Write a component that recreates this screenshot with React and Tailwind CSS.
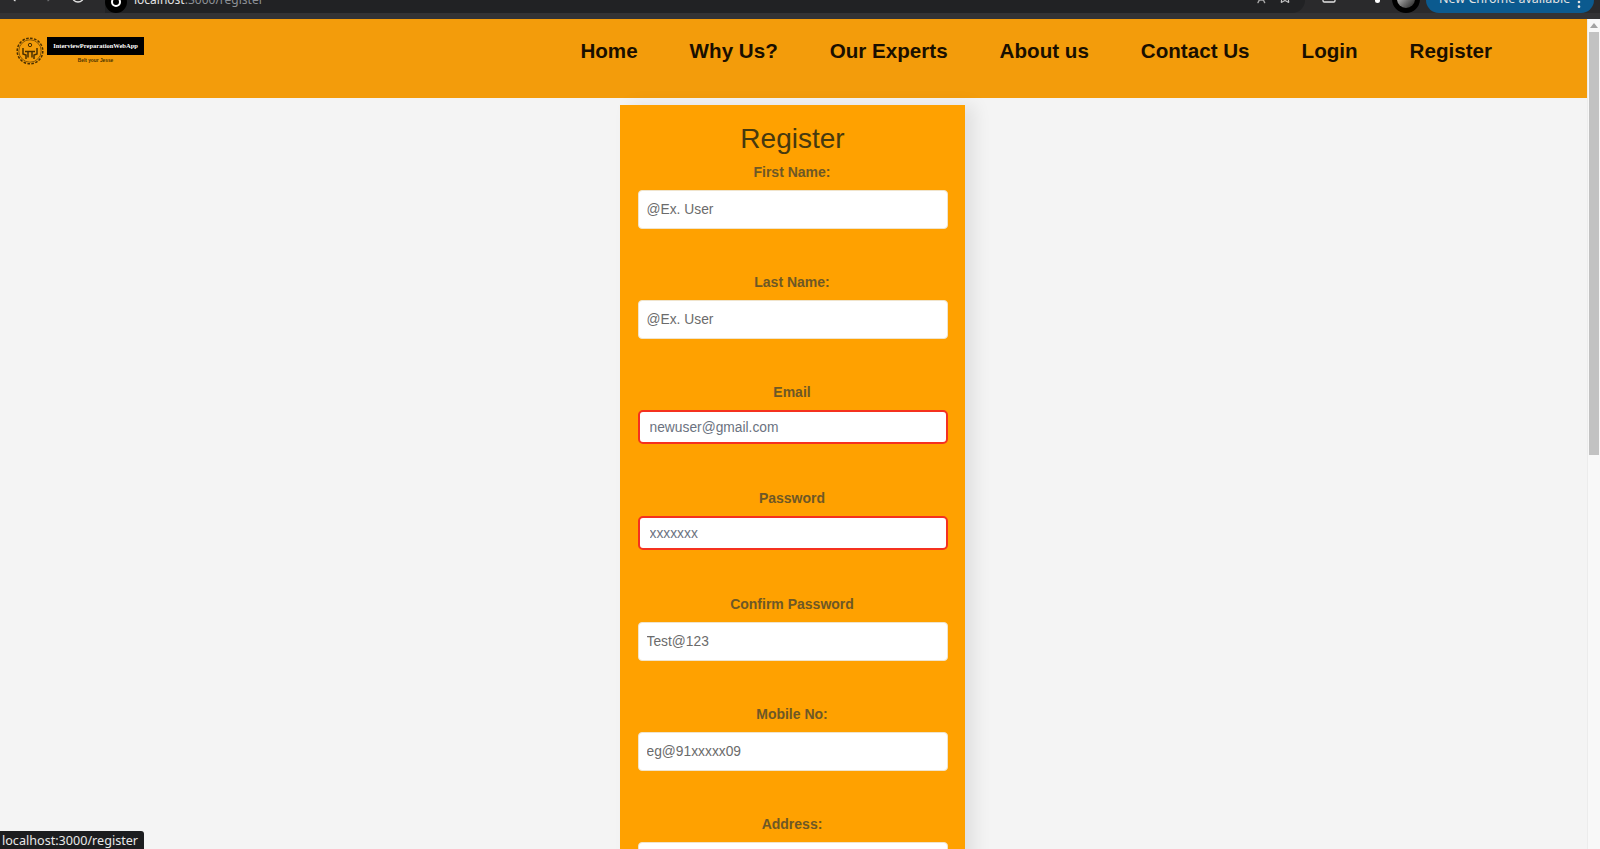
import { ArrowLeft, ArrowRight, RotateCw, Star, Languages, Square, MoreVertical } from "lucide-react";

const fields = [
  { label: "First Name:", value: "@Ex. User" },
  { label: "Last Name:", value: "@Ex. User" },
  { label: "Email", value: "newuser@gmail.com", error: true },
  { label: "Password", value: "xxxxxxx", error: true },
  { label: "Confirm Password", value: "Test@123" },
  { label: "Mobile No:", value: "eg@91xxxxx09" },
  { label: "Address:", value: "" },
];

const navLinks = ["Home", "Why Us?", "Our Experts", "About us", "Contact Us", "Login", "Register"];

const LogoMark = () => (
  <svg width="30" height="30" viewBox="0 0 30 30" fill="none" stroke="#4a2f00" strokeWidth="1">
    <circle cx="15" cy="15" r="12.8" strokeDasharray="2.6 1.4" strokeWidth="1.5" />
    <circle cx="15" cy="15" r="11.2" strokeWidth="0.6" />
    <circle cx="15" cy="9" r="1.7" />
    <path d="M8 12v6l3 1v4M22 12v6l-3 1v4M10 15.5h10M13 15.5v6M17 15.5v6" strokeWidth="1.5" />
  </svg>
);

const Field = ({ label, value, error }) => (
  <div className="flex flex-col items-center">
    <label className="text-sm leading-4 font-bold text-[#6e5826] mb-[10px] -ml-[1px]">{label}</label>
    {error ? (
      <input
        readOnly
        placeholder={value}
        className="w-[310px] h-[34px] px-[10px] text-[13.8px] bg-white border-2 border-[#f5311f] rounded-[5px] placeholder:text-[#6b7280] mb-[46px]"
      />
    ) : (
      <input
        readOnly
        placeholder={value}
        className="w-[310px] h-[39px] px-[8px] text-[13.8px] bg-white border border-[#f0e4cc] rounded-[4px] placeholder:text-[#6b6b6b] mb-[45px]"
      />
    )}
  </div>
);

const BrowserStrip = () => (
  <div className="h-[19px] shrink-0 bg-[#333335] flex flex-col overflow-hidden">
    <div className="h-[13px] shrink-0 bg-[#2a2a2c] flex items-end overflow-hidden text-[#e3e3e3]">
      <ArrowLeft size={16} className="shrink-0 ml-[7px] mb-[9px]" />
      <ArrowRight size={16} className="shrink-0 ml-[17px] mb-[9px] text-[#6d6e70]" />
      <RotateCw size={16} className="shrink-0 ml-[14px] mb-[9px]" />
      <div className="ml-[19px] h-[13px] w-[1200px] shrink-0 bg-[#212224] rounded-br-[16px] flex items-end">
        <div className="shrink-0 w-[22px] h-[22px] rounded-full bg-black flex items-center justify-center">
          <div className="w-[10px] h-[10px] rounded-full border-2 border-white" />
        </div>
        <span className="ml-[7px] text-xs leading-none mb-[7px] font-['Noto_Sans',sans-serif] whitespace-nowrap">
          localhost<span className="text-[#8d9196]">:3000/register</span>
        </span>
        <Languages size={16} className="shrink-0 ml-auto mb-[9px] text-[#a8a8a8]" />
        <Star size={14} className="shrink-0 ml-[12px] mr-[13px] mb-[9px] text-[#c4c4c4]" />
      </div>
      <Square size={16} className="shrink-0 ml-[16px] mb-[9px]" />
      <div className="shrink-0 ml-[38px] mb-[10px] w-[5px] h-[5px] rounded-full bg-white" />
      <div className="shrink-0 ml-[12px] w-[28px] h-[28px] rounded-full bg-black flex items-center justify-center">
        <div className="w-[18px] h-[18px] rounded-full bg-gradient-to-br from-[#eeeeee] to-[#222222]" />
      </div>
      <div className="shrink-0 ml-[6px] h-[13px] w-[168px] bg-[#0b5a8f] rounded-b-[14px] flex items-end pl-[13px] text-[12.5px] leading-none font-['Noto_Sans',sans-serif] whitespace-nowrap">
        <span className="mb-[8px]">New Chrome available</span>
        <MoreVertical size={16} className="shrink-0 ml-auto mr-[7px] mb-[3px]" />
      </div>
    </div>
  </div>
);

export default function App() {
  return (
    <div className="relative h-[849px] w-[1600px] overflow-hidden flex flex-col bg-[#f4f4f4] font-['Liberation_Sans',Arial,sans-serif]">
      <BrowserStrip />
      <div className="flex flex-1 min-h-0">
        <div className="flex-1 min-w-0">
          <header className="h-[79px] bg-[#f39c0b] flex items-start justify-between pl-[15px] pr-[95px]">
            <div className="flex items-start mt-[17px]">
              <LogoMark />
              <div className="flex flex-col items-center ml-[2px] mt-[1px]">
                <div className="w-[97px] h-[18px] bg-black text-white text-[6.5px] font-bold leading-[18px] text-center font-['Liberation_Serif',serif] whitespace-nowrap">
                  InterviewPreparationWebApp
                </div>
                <div className="text-[4.8px] leading-[11px] font-bold text-[#4a3200]">Belt your Jesse</div>
              </div>
            </div>
            <nav className="flex gap-[52px] mt-[19px]">
              {navLinks.map((link) => (
                <a key={link} className="text-[20.6px] leading-[26px] font-bold text-[#1a0f00]">{link}</a>
              ))}
            </nav>
          </header>
          <main className="flex justify-center">
            <div className="w-[345px] h-[800px] mt-[7px] mr-[2px] bg-[#ffa100] shadow-[10px_0_16px_rgba(0,0,0,0.08)] flex flex-col">
              <h1 className="text-[28px] leading-[32px] text-center text-[#46390f] mt-[18px] mb-[9px]">Register</h1>
              {fields.map((f) => (
                <Field key={f.label} {...f} />
              ))}
            </div>
          </main>
        </div>
        <div className="w-[13px] shrink-0 bg-[#f8f8f8] flex flex-col items-center border-l border-[#ececec]">
          <div className="mt-[4px] w-0 h-0 border-x-[4px] border-x-transparent border-b-[5px] border-b-[#a3a3a3]" />
          <div className="mt-[4px] w-[10px] h-[423px] bg-[#c2c2c2]" />
        </div>
      </div>
      <div className="absolute left-0 bottom-0 h-[18px] w-[144px] bg-[#1c1d1f] rounded-tr-[3px] text-[#e8e8e8] text-[12.6px] leading-[18px] pt-[1px] pl-[2px] font-['Noto_Sans',sans-serif] whitespace-nowrap">
        localhost:3000/register
      </div>
    </div>
  );
}
